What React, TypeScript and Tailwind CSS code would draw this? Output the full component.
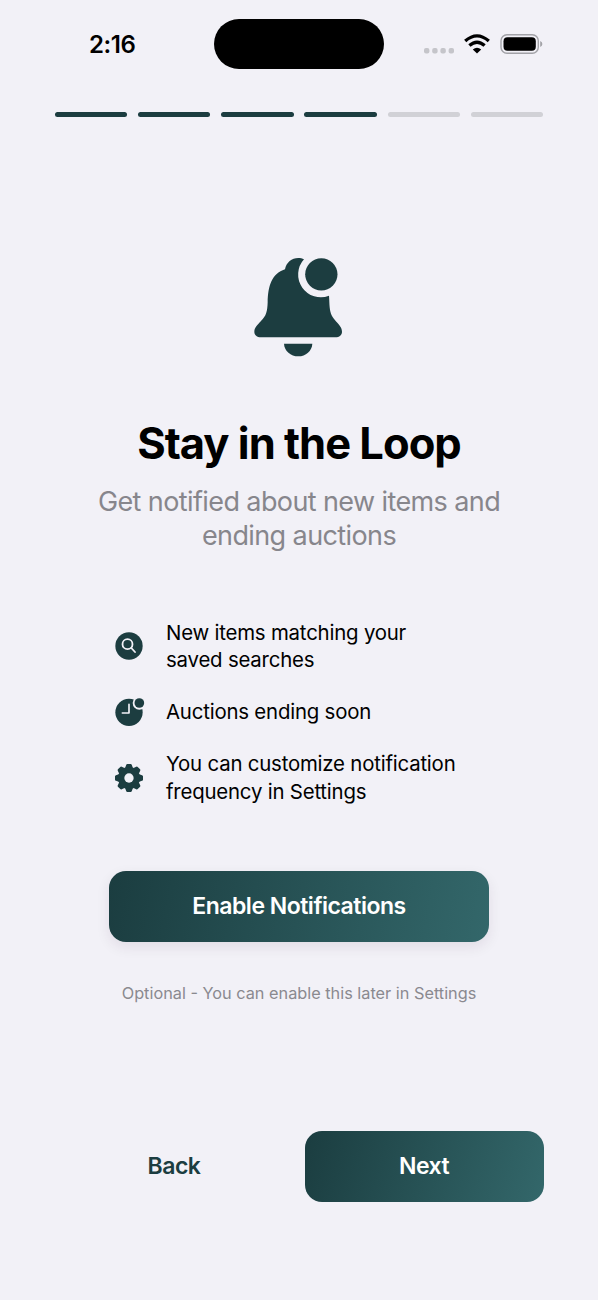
import type { ReactNode } from 'react';

const TOTAL_STEPS = 6;
const CURRENT_STEP = 4;

function StatusBar() {
  return (
    <div className="h-[88px] flex items-start">
      <div className="w-[214px] pt-[29px] pl-[89px] text-[24px] leading-[32px] font-semibold tracking-[-0.4px]">
        2:16
      </div>
      <div className="w-[170px] h-[50px] mt-[19px] rounded-full bg-black" />
      <svg className="ml-[36px] mt-[30px]" width="128" height="28" viewBox="0 0 128 28">
        <g fill="#c5c5ca">
          <rect x="4" y="18" width="5.4" height="5.4" rx="2" />
          <rect x="12.2" y="18" width="5.4" height="5.4" rx="2" />
          <rect x="20.4" y="18" width="5.4" height="5.4" rx="2" />
          <rect x="28.6" y="18" width="5.4" height="5.4" rx="2" />
        </g>
        <g fill="none" stroke="#000" strokeWidth="3.3">
          <path d="M45.2 11 Q57 0.8 68.8 11" />
          <path d="M49.4 15.6 Q57 8.8 64.6 15.6" />
        </g>
        <path d="M52.8 19.4 Q57 16 61.2 19.4 L57 23.4 Z" />
        <rect x="81" y="4.7" width="37.3" height="18.6" rx="6" fill="none" stroke="#a2a2a7" strokeWidth="1.4" />
        <rect x="83.5" y="7.2" width="32.3" height="13.6" rx="4" />
        <path d="M120.2 11 Q122.4 12 122.4 14 Q122.4 16 120.2 17 Z" fill="#a2a2a7" />
      </svg>
    </div>
  );
}

function StepProgress() {
  return (
    <div className="flex gap-[10.9px] px-[54.5px] pt-[23.5px]">
      {Array.from({ length: TOTAL_STEPS }, (_, i) => (
        <div
          key={i}
          className={`h-[5.5px] flex-1 rounded-full ${i < CURRENT_STEP ? 'bg-[#1c3d40]' : 'bg-[#d1d1d6]'}`}
        />
      ))}
    </div>
  );
}

function BellBadgeIcon() {
  return (
    <svg width="120" height="125" viewBox="0 0 360 375" fill="#1c3d40">
      <path d="M66 277 C54 277 46 270 46 260 C46 248 54 241 66 228 C82 212 85 200 86 172 C87 122 98 87 138 73 C142 52 158 39 178 39 C184 39 190 40 195 43 A68 68 0 0 0 270 152 C271 165 271 175 272 187 C274 208 280 217 292 230 C302 241 309 248 309 260 C309 270 301 277 289 277 Z" />
      <path d="M135 296 H220 C219 318 200 334 178 334 C155 334 136 318 135 296 Z" />
      <circle cx="247" cy="88" r="48.5" />
    </svg>
  );
}

function SearchIcon() {
  return (
    <svg width="30" height="30" viewBox="0 0 90 90">
      <circle cx="45" cy="45" r="41" fill="#1c3d40" />
      <g fill="none" stroke="#f2f1f7" strokeWidth="5.5" strokeLinecap="round">
        <circle cx="40.5" cy="39.5" r="15" />
        <path d="M52 51 L63 63" />
      </g>
    </svg>
  );
}

function ClockBadgeIcon() {
  return (
    <svg width="30" height="30" viewBox="0 0 90 90" className="overflow-visible">
      <circle cx="45" cy="46" r="41" fill="#1c3d40" />
      <path d="M45 22 V48 H25" fill="none" stroke="#f2f1f7" strokeWidth="5" strokeLinecap="round" strokeLinejoin="round" />
      <circle cx="76" cy="18" r="20" fill="#f2f1f7" />
      <circle cx="76" cy="18" r="14.5" fill="#1c3d40" />
    </svg>
  );
}

function GearIcon() {
  return (
    <svg width="30" height="30" viewBox="0 0 90 90" fill="#1c3d40">
      {[0, 45, 90, 135, 180, 225, 270, 315].map((angle) => (
        <path
          key={angle}
          d="M33 16 L36.5 6 Q37.5 3 40 3 H50 Q52.5 3 53.5 6 L57 16 Z"
          transform={`rotate(${angle} 45 45)`}
        />
      ))}
      <circle cx="45" cy="45" r="33" />
      <circle cx="45" cy="45" r="14" fill="#f2f1f7" />
    </svg>
  );
}

function Feature({ icon, children }: { icon: ReactNode; children: ReactNode }) {
  return (
    <li className="flex items-center">
      <span className="w-[52px] shrink-0">{icon}</span>
      <p>{children}</p>
    </li>
  );
}

export default function App() {
  return (
    <div className="w-[598px] h-[1300px] overflow-hidden bg-[#f2f1f7] text-black font-['Inter','Liberation_Sans',sans-serif]">
      <StatusBar />
      <StepProgress />

      <main className="flex flex-col items-center pt-[128px]">
        <BellBadgeIcon />

        <h1 className="mt-[47px] text-[43.5px] leading-[52px] font-bold tracking-[-1px] whitespace-nowrap">
          Stay in the Loop
        </h1>
        <p className="mt-[16px] text-center text-[27px] leading-[34px] tracking-[-0.6px] text-[#87868c] whitespace-nowrap">
          Get notified about new items and
          <br />
          ending auctions
        </p>

        <ul className="mt-[66px] w-[370px] flex flex-col gap-[23.5px] text-[20.4px] leading-[27.2px] tracking-[-0.2px] whitespace-nowrap">
          <Feature icon={<SearchIcon />}>
            New items matching your
            <br />
            saved searches
          </Feature>
          <Feature icon={<ClockBadgeIcon />}>Auctions ending soon</Feature>
          <Feature icon={<GearIcon />}>
            You can customize notification
            <br />
            frequency in Settings
          </Feature>
        </ul>

        <button className="mt-[66px] w-[380px] h-[71px] rounded-[17px] bg-[linear-gradient(100.6deg,#1b3d40,#33676a)] text-white text-[23px] font-semibold tracking-[-0.5px] shadow-[0_5px_14px_rgba(60,20,50,0.09)]">
          Enable Notifications
        </button>
        <p className="mt-[40px] text-[16.3px] leading-[22px] text-[#8a898f] whitespace-nowrap">
          Optional - You can enable this later in Settings
        </p>
      </main>

      <footer className="mt-[127px] px-[54.5px] flex gap-[11px]">
        <button className="flex-1 h-[71px] text-[23px] font-semibold tracking-[-0.5px] text-[#1c3d40]">Back</button>
        <button className="flex-1 h-[71px] rounded-[17px] bg-[linear-gradient(106.5deg,#1b3d40,#33676a)] text-white text-[23px] font-semibold tracking-[-0.5px]">
          Next
        </button>
      </footer>
    </div>
  );
}
